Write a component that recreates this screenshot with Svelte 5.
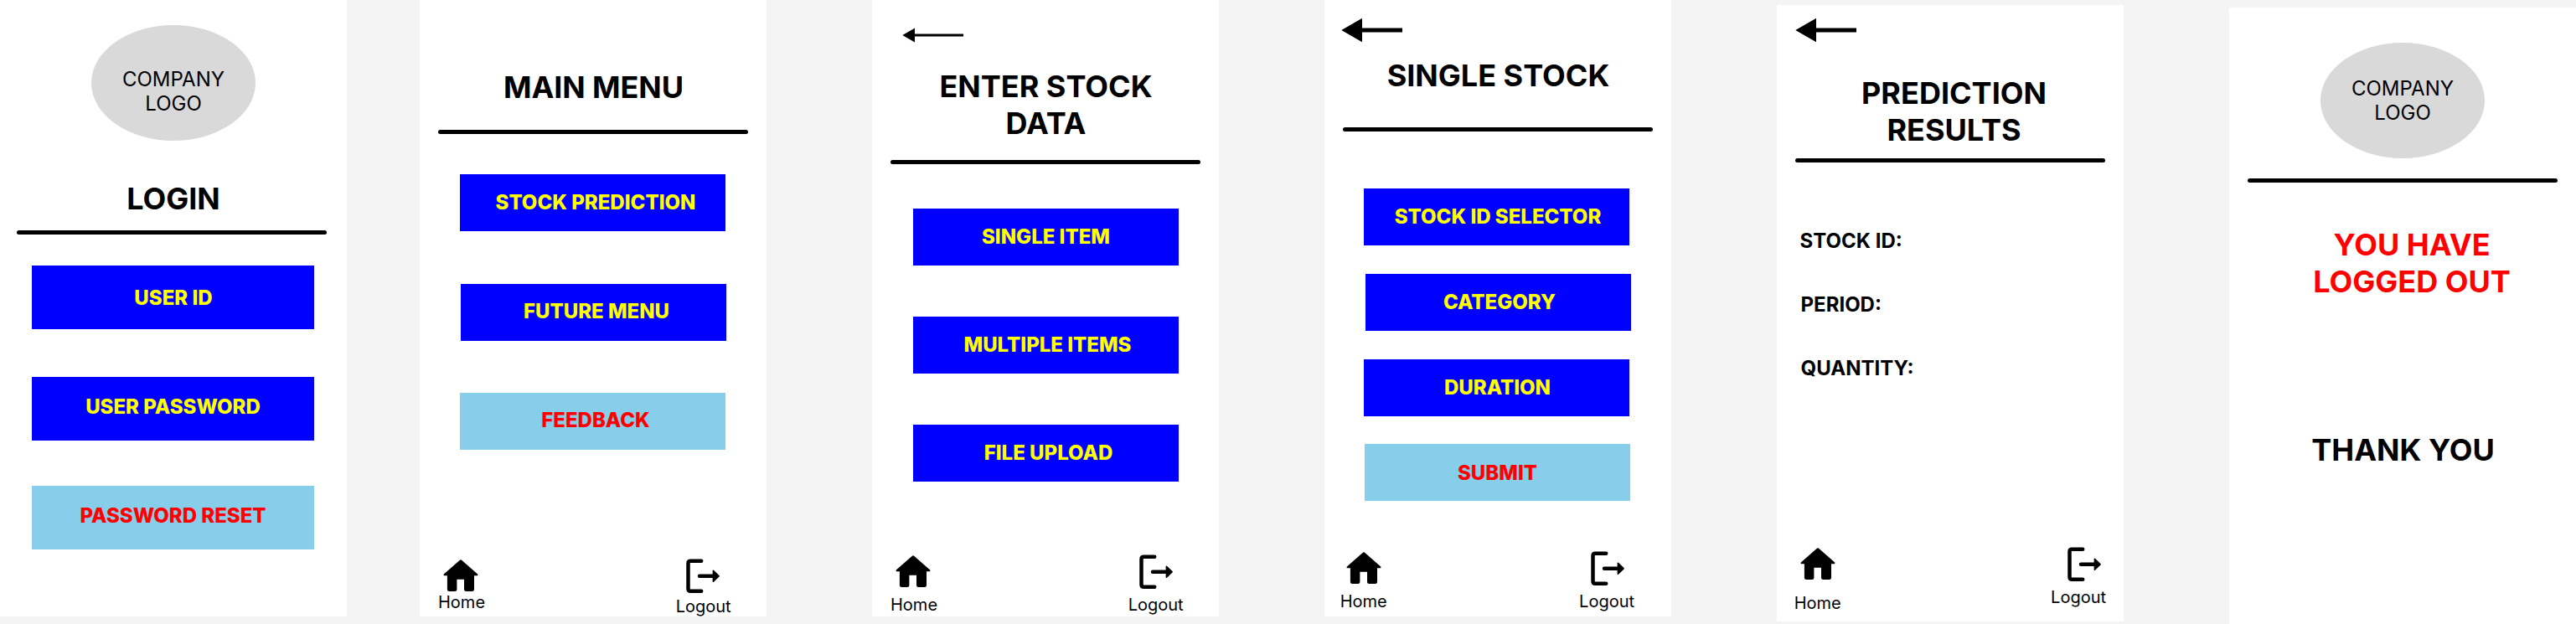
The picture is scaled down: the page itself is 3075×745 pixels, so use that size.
{#snippet thinArrow()}
  <svg class="arrow" width="73" height="28" viewBox="0 0 73 28" aria-label="Back">
    <path d="M0.3 14 L15 5.5 V12.5 H73 V15.5 H15 V22.5 Z" />
  </svg>
{/snippet}

{#snippet thickArrow()}
  <svg class="arrow" width="73" height="28" viewBox="0 0 73 28" aria-label="Back">
    <path d="M0.3 14 L25 -0.3 V11.5 H73 V16.5 H25 V28.3 Z" />
  </svg>
{/snippet}

{#snippet footer()}
  <nav class="footer">
    <a class="link home" href="#home">
      <svg width="42" height="38" viewBox="0 0 42 38">
        <path d="M19.6 1 Q21 -0.3 22.4 1 L41.2 17.5 Q42 19.2 40.6 19.3 H37 V35.5 Q37 38 34.5 38 H27.5 Q25 38 25 35.5 V23.8 H16.4 V35.5 Q16.4 38 13.9 38 H7.4 Q4.9 38 4.9 35.5 V19.3 H1.3 Q0 19 0.8 17.5 Z" />
      </svg>
      <span>Home</span>
    </a>
    <a class="link logout" href="#logout">
      <svg width="41" height="42" viewBox="0 0 41 42">
        <path d="M18.2 2.8 H5.3 Q2.5 2.8 2.5 5.6 V36 Q2.5 38.8 5.3 38.8 H18.2 M16 20.8 H34" fill="none" stroke="#000" stroke-width="4.5" stroke-linecap="round" />
        <path d="M31.6 14.4 Q31.8 13 33 13.8 L39.5 20 Q40.3 20.8 39.5 21.6 L33 27.8 Q31.8 28.6 31.6 27.2 Z" />
      </svg>
      <span>Logout</span>
    </a>
  </nav>
{/snippet}

<main class="board">
  <section class="screen login">
    <div class="brand">COMPANY<br />LOGO</div>
    <h1>LOGIN</h1>
    <hr />
    <button class="b1"><span>USER ID</span></button>
    <button class="b2"><span>USER PASSWORD</span></button>
    <button class="b3 alt"><span>PASSWORD RESET</span></button>
  </section>

  <section class="screen menu">
    <h1>MAIN MENU</h1>
    <hr />
    <button class="b1"><span>STOCK PREDICTION</span></button>
    <button class="b2"><span>FUTURE MENU</span></button>
    <button class="b3 alt"><span>FEEDBACK</span></button>
    {@render footer()}
  </section>

  <section class="screen entry">
    {@render thinArrow()}
    <h1>ENTER STOCK<br />DATA</h1>
    <hr />
    <button class="b1"><span>SINGLE ITEM</span></button>
    <button class="b2"><span>MULTIPLE ITEMS</span></button>
    <button class="b3"><span>FILE UPLOAD</span></button>
    {@render footer()}
  </section>

  <section class="screen single">
    {@render thickArrow()}
    <h1>SINGLE STOCK</h1>
    <hr />
    <button class="b1"><span>STOCK ID SELECTOR</span></button>
    <button class="b2"><span>CATEGORY</span></button>
    <button class="b3"><span>DURATION</span></button>
    <button class="b4 alt"><span>SUBMIT</span></button>
    {@render footer()}
  </section>

  <section class="screen results">
    {@render thickArrow()}
    <h1>PREDICTION<br />RESULTS</h1>
    <hr />
    <p class="stock">STOCK ID:</p>
    <p class="period">PERIOD:</p>
    <p class="quantity">QUANTITY:</p>
    {@render footer()}
  </section>

  <section class="screen goodbye">
    <div class="brand">COMPANY<br />LOGO</div>
    <hr />
    <h1 class="notice">YOU HAVE<br />LOGGED OUT</h1>
    <h1 class="thanks">THANK YOU</h1>
  </section>
</main>

<style>
  :global(body) { background: #f4f4f4; }

  .board {
    display: flex;
    align-items: flex-start;
    gap: 126px;
    width: 3075px;
    height: 745px;
    overflow: hidden;
    background: #f4f4f4;
    color: #000;
    font-family: Inter, sans-serif;
  }
  .screen {
    display: flex;
    flex-direction: column;
    flex: none;
    width: 414px;
    height: 736px;
    background: #fff;
  }
  .screen > * { flex: none; }
  .login { margin-right: -39px; }

  .brand {
    box-sizing: border-box;
    width: 196px;
    height: 138px;
    margin-left: 109px;
    border-radius: 50%;
    background: #d9d9d9;
    font-size: 24px;
    line-height: 29px;
    text-align: center;
  }
  h1 {
    margin: 0;
    font-size: 36px;
    font-weight: 700;
    line-height: 44px;
    text-align: center;
    white-space: nowrap;
  }
  hr {
    width: 370px;
    height: 5px;
    margin: 0 0 0 22px;
    border: 0;
    border-radius: 2.5px;
    background: #000;
  }
  button {
    display: flex;
    justify-content: center;
    align-items: flex-start;
    width: 317px;
    height: 68px;
    margin: 0 0 0 49px;
    padding: 19px 0 0;
    border: 0;
    background: #00f;
    color: #ff0;
    font: 800 24px/29px Inter, sans-serif;
    white-space: nowrap;
  }
  button.alt { background: #87ceeb; color: #f00; }
  p {
    margin: 0;
    font-size: 24px;
    font-weight: 700;
    line-height: 29px;
  }

  .footer {
    display: grid;
    grid-template-columns: 200px 214px;
    align-items: start;
  }
  .link {
    display: flex;
    flex-direction: column;
    align-items: flex-start;
    color: #000;
    font-size: 20px;
    line-height: 24px;
    text-decoration: none;
  }
  svg { display: block; overflow: visible; }

  /* Login */
  .login .brand { margin-top: 30px; padding-top: 50px; }
  .login h1 { margin-top: 47px; }
  .login hr { margin: 16px 0 0 20px; }
  .login button { width: 337px; height: 76px; margin-left: 38px; padding-top: 21px; }
  .login .b1 { margin-top: 37px; padding-top: 24px; padding-left: 1px; }
  .login .b2 { margin-top: 57px; }
  .login .b3 { margin-top: 54px; }

  /* Main menu */
  .menu h1 { margin: 82px 0 0 1px; letter-spacing: -0.1px; }
  .menu hr { margin-top: 29px; }
  .menu button { padding-top: 18px; }
  .menu .b1 { margin: 48px 0 0 48px; padding-top: 19px; padding-left: 7px; }
  .menu .b2 { margin-top: 63px; padding-left: 7px; }
  .menu .b3 { margin: 62px 0 0 48px; padding-left: 7px; }
  .menu .footer { margin-top: 113px; }
  .menu .home svg { margin: 18px 0 0 28px; }
  .menu .home span { margin: 1px 0 0 22px; }
  .menu .logout svg { margin: 17px 0 0 117.5px; }
  .menu .logout span { margin: 3px 0 0 105.7px; }

  /* Enter stock data */
  .entry .arrow { margin: 28px 0 0 36px; }
  .entry h1 { margin: 25px 0 0 1px; }
  .entry hr { margin-top: 22px; }
  .entry .b1 { margin-top: 53px; }
  .entry .b2 { margin-top: 61px; padding-left: 4px; }
  .entry .b3 { margin-top: 61px; padding-left: 6px; }
  .entry .footer { margin-top: 75px; }
  .entry .home svg { margin: 13px 0 0 28px; }
  .entry .home span { margin: 9px 0 0 22px; }
  .entry .logout svg { margin: 12px 0 0 118.5px; }
  .entry .logout span { margin: 6px 0 0 105.7px; }

  /* Single stock */
  .single .arrow { margin: 22px 0 0 20px; }
  .single h1 { margin: 18px 0 0 1px; }
  .single hr { margin-top: 40px; }
  .single .b1 { margin: 68px 0 0 47px; padding-left: 3px; }
  .single .b2 { margin-top: 34px; padding-left: 3px; }
  .single .b3 { margin: 34px 0 0 47px; padding-left: 2px; }
  .single .b4 { margin: 33px 0 0 48px; padding-top: 20px; }
  .single .footer { margin-top: 52px; }
  .single .home svg { margin: 9px 0 0 26px; }
  .single .home span { margin: 9px 0 0 18.7px; }
  .single .logout svg { margin: 8px 0 0 117.5px; }
  .single .logout span { margin: 6px 0 0 104.1px; }

  /* Prediction results */
  .results { margin-top: 6px; }
  .results .arrow { margin: 16px 0 0 22px; }
  .results h1 { margin: 39px 0 0 9px; }
  .results hr { margin-top: 12px; }
  .results .stock { margin: 79px 0 0 27.5px; }
  .results .period { margin: 47px 0 0 28.5px; }
  .results .quantity { margin: 47px 0 0 28.5px; }
  .results .footer { margin-top: 196px; }
  .results .home svg { margin: 4px 0 0 28px; }
  .results .home span { margin: 16px 0 0 20.7px; }
  .results .logout svg { margin: 3px 0 0 146.7px; }
  .results .logout span { margin: 6px 0 0 127.1px; }

  /* Logged out */
  .goodbye { margin-top: 9px; }
  .goodbye .brand { margin-top: 42px; padding-top: 40px; }
  .goodbye hr { margin-top: 24px; }
  .goodbye .notice { margin: 52px 0 0 22px; color: #f00; }
  .goodbye .thanks { margin: 157px 0 0 1px; }
</style>
